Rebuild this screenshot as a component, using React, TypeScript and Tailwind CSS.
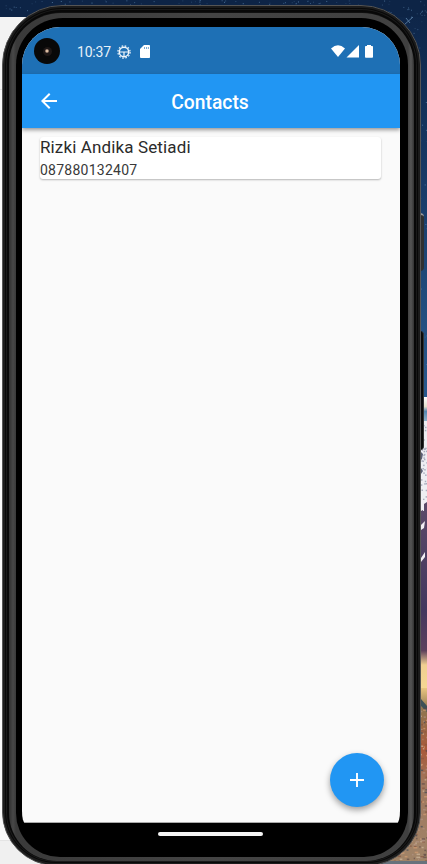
import React from "react";

const noise = (n: number) => {
  const v = Math.sin(n * 127.1 + 11.7) * 43758.5453;
  return v - Math.floor(v);
};

const stars = Array.from({ length: 330 }, (_, i) => {
  const top = i < 190;
  return {
    x: top ? noise(i) * 427 : 380 + noise(i) * 47,
    y: top ? noise(i + 500) * 17 : noise(i + 500) * 390,
    o: 0.12 + noise(i + 900) * 0.45,
  };
});

const rubble = Array.from({ length: 420 }, (_, i) => ({
  x: 385 + noise(i + 40) * 42,
  y: 705 + noise(i + 1300) * 157,
  w: 1 + noise(i + 77) * 3,
  c: ["#d79f74", "#5c4a48", "#85543f", "#b09485", "#3c4654", "#d3bda2"][Math.floor(noise(i + 3000) * 6)],
}));

const specks = Array.from({ length: 40 }, (_, i) => ({
  x: 420 + noise(i + 60) * 7,
  y: 424 + noise(i + 800) * 80,
}));

function Wallpaper() {
  return (
    <svg className="absolute inset-0" width="427" height="864" viewBox="0 0 427 864" aria-hidden="true">
      <defs>
        <linearGradient id="sky" x1="0" y1="0" x2="0" y2="1">
          <stop offset="0" stopColor="#0d2446" />
          <stop offset="0.4" stopColor="#173763" />
          <stop offset="1" stopColor="#285a8e" />
        </linearGradient>
        <linearGradient id="cloud" x1="0" y1="0" x2="0" y2="1">
          <stop offset="0" stopColor="#ffffff" />
          <stop offset="0.4" stopColor="#e6dfcb" />
          <stop offset="0.6" stopColor="#5487b0" />
          <stop offset="1" stopColor="#8fb3cc" />
        </linearGradient>
        <linearGradient id="dusk" x1="0" y1="0" x2="0" y2="1">
          <stop offset="0" stopColor="#5a4968" />
          <stop offset="0.55" stopColor="#43375e" />
          <stop offset="0.78" stopColor="#5c405c" />
          <stop offset="0.86" stopColor="#f0cf92" />
          <stop offset="1" stopColor="#f6d893" />
        </linearGradient>
        <linearGradient id="ground" x1="0" y1="0" x2="0" y2="1">
          <stop offset="0" stopColor="#e9c680" />
          <stop offset="0.12" stopColor="#8f7550" />
          <stop offset="0.35" stopColor="#a8593a" />
          <stop offset="0.55" stopColor="#a0785f" />
          <stop offset="1" stopColor="#a08468" />
        </linearGradient>
      </defs>
      <rect width="427" height="864" fill="#f9f9f9" />
      <rect y="841" width="60" height="23" fill="#f0f0f0" />
      <rect y="840" width="60" height="1" fill="#e4e4e4" />
      <rect y="17" width="60" height="72" fill="#f3f3f3" />
      <rect y="89" width="30" height="1" fill="#e2e2e2" />
      <rect x="360" width="67" height="400" fill="url(#sky)" />
      <rect width="427" height="17" fill="#0d2446" />
      {stars.map((s, i) => (
        <rect key={i} x={s.x} y={s.y} width="1" height="1" fill="#7fb0dc" opacity={s.o} />
      ))}
      <path d="M404 25l9-8M406 18l4 5" stroke="#7fa9d0" strokeWidth="1" opacity=".6" />
      <rect x="380" y="397" width="47" height="24" fill="url(#cloud)" />
      <rect x="380" y="421" width="47" height="90" fill="#eeeef2" />
      {specks.map((s, i) => (
        <rect key={i} x={s.x} y={s.y} width="1.5" height="1.5" fill="#a9adbd" />
      ))}
      <path d="M421 452l2 2-1 5-1 1zM421 468l2 3-2 3z" fill="#5b6076" />
      <rect x="380" y="511" width="47" height="179" fill="url(#dusk)" />
      <path d="M421 500h6v3l-3 3-3 8z" fill="#f1eef3" />
      <path d="M424 504l3-2v12l-3 1zM421 511l2-1v6h-2z" fill="#5a4968" />
      <path d="M421 525l4-4-1 7-3 2zM421 558l4-6v5l-4 5z" fill="#f1eef3" />
      <rect x="370" y="688" width="57" height="176" fill="url(#ground)" />
      <path d="M421 699l6 7v6l-6-6z" fill="#3d5158" />
      {rubble.map((r, i) => (
        <rect key={i} x={r.x} y={r.y} width={r.w} height="1.5" fill={r.c} opacity=".65" />
      ))}
      <rect x="370" y="861" width="57" height="3" fill="#67727c" />
    </svg>
  );
}

function StatusBar() {
  return (
    <div className="flex h-[47px] shrink-0 items-center bg-[#1e70b5] pt-[3px] pr-[27px] pl-[12px] text-white">
      <div className="-mt-[2px] flex size-[26px] items-center justify-center rounded-full bg-[#080808]">
        <div className="flex size-[9px] items-center justify-center rounded-full bg-[#1d1716]">
          <div className="size-[4px] rounded-full bg-[radial-gradient(circle,#e4c6aa_20%,#68514a_80%)]" />
        </div>
      </div>
      <span className="ml-[17px] w-[34px] text-[14px] leading-none tracking-[-0.2px] whitespace-nowrap text-[#e7f0f8]">10:37</span>
      <svg className="-mt-px ml-[5.5px]" width="14" height="14" viewBox="0 0 14 14" fill="none" stroke="#f3f8fc">
        <circle cx="7" cy="7" r="4.7" strokeWidth="1.5" />
        <circle cx="7" cy="7" r="6.1" strokeWidth="1.2" strokeDasharray="1.6 1.594" />
        <path d="M2.5 7h9M7 7v4.5" strokeWidth="1.2" />
      </svg>
      <svg className="-mt-px ml-[9.5px]" width="11" height="13" viewBox="0 0 11 13">
        <path d="M4 0h5.2q.8 0 .8 1v11q0 1-.8 1H1q-1 0-1-1V4z" fill="white" />
        <path d="M4.5 2v2M6.5 2v2M8.4 2v2" stroke="#1e70b5" strokeWidth=".6" />
      </svg>
      <svg className="-mt-px ml-auto" width="42" height="13" viewBox="0 0 42 13" fill="white">
        <path d="M0 3.4Q7-3 14 3.4L7 12z" />
        <path d="M28 0v12.5H15.5z" />
        <path d="M36 1V0h4v1h1.2q.8 0 .8.8v10q0 .9-.8.9h-6.4q-.8 0-.8-.9v-10q0-.8.8-.8z" />
      </svg>
    </div>
  );
}

function AppBar() {
  return (
    <header className="relative z-10 grid h-[54px] shrink-0 grid-cols-[54px_1fr_54px] items-center bg-[#2196f3] text-white shadow-[0_2px_4px_rgba(0,0,0,0.4)]">
      <button aria-label="Back" className="-ml-px flex justify-center">
        <svg width="16" height="16" viewBox="4 4 16 16" fill="white">
          <path d="M20 11H7.83l5.59-5.59L12 4l-8 8 8 8 1.41-1.41L7.83 13H20v-2z" />
        </svg>
      </button>
      <h1 className="mr-[2px] pt-[3px] text-center text-[19.3px] leading-none font-medium">Contacts</h1>
    </header>
  );
}

function Screen() {
  return (
    <main className="relative flex h-[796px] w-[378px] flex-col overflow-hidden rounded-[38px_38px_3px_3px/38px_38px_12px_12px] bg-[#fafafa]">
      <StatusBar />
      <AppBar />
      <section className="flex-1 border-b border-[#aaa] pt-[9px] pr-[19px] pl-[18px]">
        <article className="flex h-[42px] flex-col rounded-[3px] bg-white text-[#2b2b2b] shadow-[0_1px_2px_rgba(0,0,0,0.28)]">
          <span className="text-[17px] leading-[21px] tracking-[0.13px] whitespace-nowrap">Rizki Andika Setiadi</span>
          <span className="mt-[2px] text-[14px] leading-[21px] tracking-[0.25px] text-[#393939]">087880132407</span>
        </article>
      </section>
      <button
        aria-label="Add contact"
        className="absolute right-[16px] bottom-[16px] flex size-[54px] items-center justify-center rounded-full bg-[#2196f3] shadow-[0_3px_6px_rgba(0,0,0,0.38)]"
      >
        <svg width="14" height="14" viewBox="0 0 14 14" stroke="white" strokeWidth="1.9">
          <path d="M0 7h14M7 0v14" />
        </svg>
      </button>
    </main>
  );
}

export default function App() {
  return (
    <div className="relative h-[864px] w-[427px] overflow-hidden pt-[5px] pl-[2px] font-['Roboto',sans-serif]">
      <Wallpaper />
      <div className="absolute top-[213px] left-[420px] h-[58px] w-[3.5px] rounded-r-sm border-t-2 border-[#999] bg-[#303030]" />
      <div className="absolute top-[331px] left-[420px] h-[119px] w-[3.5px] rounded-r-sm border-r border-[#333] bg-[#090909]" />
      <div className="relative h-[861px] w-[419px] rounded-t-[60px] rounded-b-[54px] border border-[#555] bg-[#101010] px-[6px] pt-[7px] pb-[4px] shadow-[inset_0_0_0_2px_#1c1c1c,inset_0_0_0_3px_#080808,inset_0_0_0_4px_#1a1a1a,inset_0_0_0_6px_#080808]">
        <div className="h-full rounded-t-[52px] rounded-b-[48px] bg-[linear-gradient(90deg,#303030,#484848_4px,#3a3a3a_7px,#444_50%,#404040_399px,#555_402px,#333)] pt-[5px] pr-[6px] pb-[4px] pl-[7px]">
          <div className="flex h-full flex-col rounded-t-[47px] rounded-b-[44px] bg-black pt-[9px] pl-[6px]">
            <Screen />
            <div className="mt-[9px] ml-[136px] h-[4px] w-[105px] rounded-full bg-[#f4f4f4]" />
          </div>
        </div>
      </div>
    </div>
  );
}
